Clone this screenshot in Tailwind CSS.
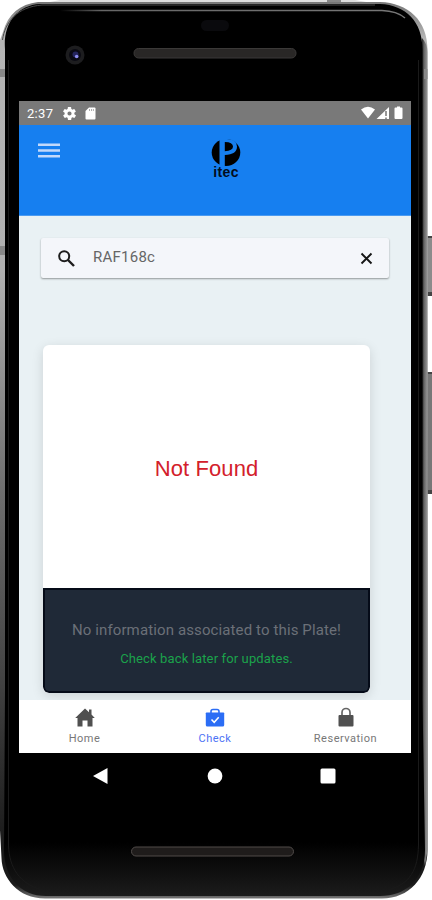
<!DOCTYPE html>
<html lang="en">
<head>
<meta charset="utf-8">
<title>Plate check</title>
<script src="https://cdn.jsdelivr.net/npm/@tailwindcss/browser@4"></script>
</head>
<body class="bg-white font-['Roboto','Liberation_Sans',sans-serif]">
<div class="relative w-[432px] h-[900px] overflow-hidden">
  <!-- phone body -->
  <svg class="absolute inset-0" width="432" height="900" viewBox="0 0 432 900" aria-hidden="true">
    <defs>
      <linearGradient id="rim" x1="0" y1="0" x2="0" y2="1">
        <stop offset="0" stop-color="#777"/><stop offset=".04" stop-color="#b4b4b4"/><stop offset=".3" stop-color="#b0b0b0"/>
        <stop offset=".55" stop-color="#6d6d6d"/><stop offset=".75" stop-color="#444"/><stop offset=".94" stop-color="#1a1a1a"/><stop offset=".985" stop-color="#1a1a1a"/><stop offset="1" stop-color="#777"/>
      </linearGradient>
      <linearGradient id="right" x1="0" y1="0" x2="1" y2="0">
        <stop offset="0" stop-color="#222"/><stop offset=".4" stop-color="#666"/><stop offset="1" stop-color="#999"/>
      </linearGradient>
      <linearGradient id="face" x1="0" y1="0" x2="0" y2="1">
        <stop offset="0" stop-color="#000"/><stop offset=".94" stop-color="#000"/><stop offset="1" stop-color="#1c1c1c"/>
      </linearGradient>
      <linearGradient id="shine" x1="0" y1="0" x2="1" y2="0">
        <stop offset="0" stop-color="#666" stop-opacity="0"/><stop offset=".12" stop-color="#666"/><stop offset="1" stop-color="#777"/>
      </linearGradient>
    </defs>
    <path d="M60 0H355L372 3H45z" fill="#ddd"/>
    <path d="M327 0h14v4h-14z" fill="#888"/>
    <path d="M426 236h5q1 0 1 2v56q0 2-1 2h-5z" fill="#8b8b8b"/><path d="M428 236h4v2h-4zM428 292h4v4h-4z" fill="#444"/>
    <path d="M426 372h4q2 0 2 2v117q0 3-2 3h-4z" fill="#777"/><path d="M428 372h4v2h-4zM428 490h4v4h-4z" fill="#444"/>
    <path d="M38 2H380C408 3 427.500 20 427.500 50V850C427.500 878 409 898.500 382 898.500H45C18 898.500 2 878 1.500 858L0 830V40L3 32C8 14 20 4 38 2z" fill="url(#rim)"/>
    <path d="M422 38Q427.500 44 427.500 52V850L425 866L422 850z" fill="url(#right)"/>
    <path d="M424 69h3.500v10H424zM0 69h5v8H0zM0 246h5v9H0z" fill="#888"/>
    <path d="M40 4H380C406 5 422.500 22 422.500 49V700L425 850C425 879 406 896 380 896H46C21 896 4 878 4 850L5 690V49C3 24 17 5 40 4z" fill="url(#face)"/>
    <path d="M2.500 40C5 22 17 7 42 5H375" fill="none" stroke="#484848"/>
    <path d="M8.500 60V845C9 868 20 884 42 890" fill="none" stroke="#1a1a1a"/>
    <path d="M60 10.500H382Q397 11 405 18" fill="none" stroke="url(#shine)" stroke-width="1.500"/>
    <path d="M418.500 60V845C418 870 410 884 388 890" fill="none" stroke="#1a1a1a"/>
    <rect x="201" y="20" width="28" height="11" rx="5.500" fill="#0a0a0d"/>
    <circle cx="75" cy="55" r="9.500" fill="#1d1d1f"/><circle cx="75" cy="55" r="6" fill="#0a0a12"/>
    <circle cx="75.500" cy="54.500" r="3" fill="#24245c"/><circle cx="76.700" cy="56.500" r="1.800" fill="#8d8df0"/>
    <rect x="134" y="48.500" width="162" height="9.500" rx="4.500" fill="#292726" stroke="#3b3938"/>
    <rect x="131.500" y="847" width="162" height="9" rx="4.500" fill="#1f1c1b" stroke="#504b49"/>
  </svg>

  <div class="relative ml-[19px] pt-[101px] w-[411px]">
    <main class="w-[392px] h-[652px] flex flex-col bg-[#e9f1f4] overflow-hidden">
      <div class="h-[24px] shrink-0 bg-[#797979] flex items-center pl-[8px] pr-[7px] text-white">
        <span class="text-[13px] leading-none tracking-[0.3px] w-[36px] pt-px">2:37</span>
        <svg width="13" height="13" viewBox="2 2 20 20" fill="#fff"><path fill-rule="evenodd" d="M19.400 13a7.800 7.800 0 0 0 0-2l2.100-1.600c.2-.2.300-.4.100-.7l-2-3.400c-.1-.2-.4-.3-.6-.2l-2.500 1c-.5-.4-1.100-.7-1.700-1L14.500 2.400c0-.2-.3-.4-.5-.4h-4c-.3 0-.5.200-.5.400l-.4 2.700c-.6.300-1.200.6-1.700 1l-2.500-1c-.2-.1-.5 0-.6.200l-2 3.400c-.1.200-.1.500.1.700L4.600 11a8 8 0 0 0 0 2l-2.100 1.600c-.2.200-.3.400-.1.700l2 3.400c.1.200.4.300.6.200l2.500-1c.5.400 1.100.7 1.700 1l.4 2.700c0 .2.200.4.500.4h4c.2 0 .5-.2.500-.4l.4-2.700c.6-.3 1.200-.6 1.700-1l2.500 1c.2.100.5 0 .6-.2l2-3.400c.1-.2.100-.5-.1-.7zM12 15.200a3.200 3.200 0 1 1 0-6.400 3.200 3.200 0 0 1 0 6.400z"/></svg>
        <svg class="ml-[9px]" width="11" height="13" viewBox="0 0 11 13"><path d="M4 .5h5.500q1 0 1 1v10q0 1-1 1h-8q-1 0-1-1V4z" fill="#fff"/><path d="M4.500 2v2M6.500 2v2M8.400 2v2" stroke="#999" stroke-width=".8"/></svg>
        <svg class="ml-auto" width="43" height="14" viewBox="0 0 43 14" fill="#fff"><path d="M0 3.500Q7-2 14 3.500L7 12.500zM28 1v12H15.500z"/><path d="M25 5v5M25 11.500v1.500" stroke="#777" stroke-width="1.500"/><path d="M36 .5h3v1h1.500q1 0 1 1V12q0 1-1 1h-6q-1 0-1-1V2.500q0-1 1-1H36z"/></svg>
      </div>
      <header class="h-[91px] shrink-0 bg-[#167ff0] flex items-start border-b border-[#4b9bf1]">
        <svg class="ml-[19px] mt-[18px]" width="22" height="15" viewBox="0 0 22 15"><path d="M0 1.700h22M0 7.500h22M0 13.200h22" stroke="#c2d9fb" stroke-width="2.600"/></svg>
        <div class="ml-[149px] mt-[14px] w-[34px] flex flex-col items-center">
          <svg width="30" height="28" viewBox="0 0 30 28"><ellipse cx="15" cy="13.500" rx="14.300" ry="13.500" fill="#000"/><path d="M8.500 0H16Q26 0 26 7.500Q26 15.500 13.800 16V28H8.500zM13.800 3V12.200Q22 12 22 7.600T13.800 3z" fill="#167ff0" fill-rule="evenodd"/></svg>
          <span class="text-[14px] font-bold leading-[13px] text-[#030d1c] tracking-[0.4px] font-['Liberation_Sans',sans-serif] -mt-px">itec</span>
        </div>
      </header>
      <div class="ml-[22px] mt-[22px] w-[348px] h-[40px] shrink-0 rounded-[2px] bg-[#f4f6fa] shadow-[0_1px_2px_rgba(0,0,0,0.38)] flex items-center pl-[16px] pr-[16px]">
        <svg width="19" height="19" viewBox="0 0 19 19" fill="none" stroke="#1c1c1c"><circle cx="7.200" cy="7.200" r="5" stroke-width="2"/><path d="M11 11l6 6" stroke-width="2.400"/></svg>
        <span class="ml-[17px] -mt-px text-[15px] leading-none tracking-[0.25px] text-[#666]">RAF168c</span>
        <svg class="ml-auto" width="13" height="13" viewBox="0 0 13 13"><path d="M1.500 1.500l10 10M11.500 1.500l-10 10" stroke="#151515" stroke-width="1.900"/></svg>
      </div>
      <section class="ml-[24px] mt-[67px] w-[327px] h-[348px] shrink-0 rounded-[6px] bg-white overflow-hidden shadow-[0_3px_12px_rgba(0,0,0,0.13)] flex flex-col text-center">
        <div class="h-[243px] flex items-center justify-center text-[22px] leading-none tracking-[0.1px] font-['Liberation_Sans',sans-serif] text-[#d3202b]"><span class="pt-[5px]">Not Found</span></div>
        <div class="flex-1 bg-[#1f2937] border-2 border-[#050b18] rounded-b-[6px] pt-[31px]">
          <p class="text-[15px] leading-[18px] tracking-[0.12px] text-[#6b7078] whitespace-nowrap">No information associated to this Plate!</p>
          <p class="text-[13px] leading-[16px] mt-[12px] tracking-[0.13px] text-[#1ba24b] whitespace-nowrap">Check back later for updates.</p>
        </div>
      </section>
      <nav class="mt-auto h-[53px] shrink-0 relative bg-white flex text-[11px] leading-none tracking-[0.5px] text-[#777]">
        <div class="w-[131px] flex flex-col items-center pt-[8px]">
          <svg width="20" height="20" viewBox="0 0 20 20" fill="#505050"><path d="M10 .5l4 3.700V1.500h2.500v5L19.800 10H17.500v8.500H12.500v-6h-5v6H2.500V10H.2z"/></svg>
          <span class="mt-[5px]">Home</span>
        </div>
        <div class="w-[130px] flex flex-col items-center pt-[8px] text-[#4c73f5]">
          <svg width="20" height="20" viewBox="0 0 20 20"><path d="M6 5V3.500Q6 1.500 8 1.500h4q2 0 2 2V5" fill="none" stroke="#2b6df5" stroke-width="1.600"/><path d="M1.500 4.500h17q.7 0 .7.700V17q0 1.500-1.500 1.500H2.300Q.8 18.500.8 17V5.200q0-.7.700-.7z" fill="#2b6df5"/><path d="M6.500 11.500l2.700 2.800 4.500-5" fill="none" stroke="#fff" stroke-width="1.500"/></svg>
          <span class="mt-[5px]">Check</span>
        </div>
        <div class="w-[131px] flex flex-col items-center pt-[7px]">
          <svg width="18" height="21" viewBox="0 0 18 21"><path d="M5 9V5.500a4 4 0 0 1 8 0V9" fill="none" stroke="#666" stroke-width="1.700"/><rect x="1.500" y="8" width="15" height="11.500" rx="1" fill="#505050"/></svg>
          <span class="mt-[5px]">Reservation</span>
        </div>
      </nav>
    </main>
    <div class="w-[392px] h-[46px] flex items-center pl-[74px] pr-[75px] justify-between">
      <svg width="15" height="18" viewBox="0 0 15 18"><path d="M14.500 1v16L0 9z" fill="#fff"/></svg>
      <svg class="ml-[2px]" width="16" height="16" viewBox="0 0 16 16"><circle cx="8" cy="8" r="7.400" fill="#fff"/></svg>
      <svg width="16" height="16" viewBox="0 0 16 16"><rect x=".5" y=".5" width="15" height="15" rx="1.500" fill="#fff"/></svg>
    </div>
  </div>
</div>
</body>
</html>
